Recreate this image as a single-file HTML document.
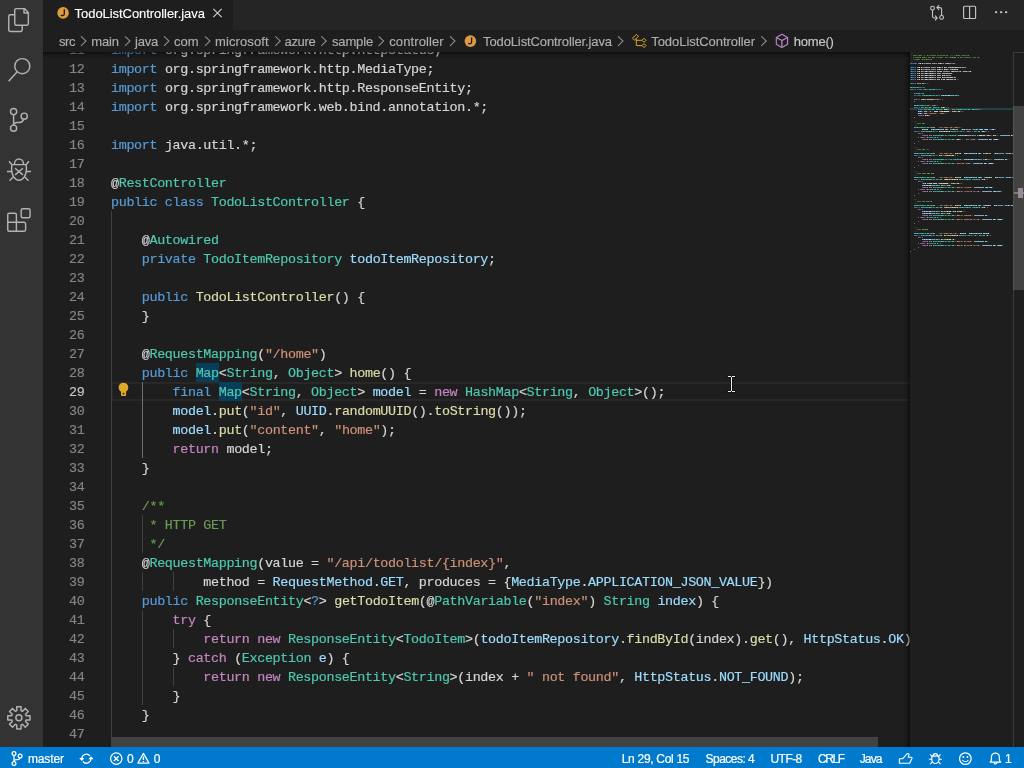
<!DOCTYPE html><html><head><meta charset="utf-8"><title>TodoListController.java</title><style>
*{box-sizing:border-box;margin:0;padding:0}
html,body{width:1024px;height:768px;overflow:hidden;background:#1e1e1e}
body{position:relative;font-family:"Liberation Sans",sans-serif;color:#ccc}
i{font-style:normal}
.abs{position:absolute}
#act{left:0;top:0;width:43px;height:747px;background:#333}
#tabs{left:43px;top:0;width:981px;height:30px;background:#252526}
#tab{left:0;top:0;width:190px;height:30px;background:#1e1e1e}
#bc{left:43px;top:30px;width:981px;height:22px;background:#1e1e1e;z-index:5}
#ed{left:43px;top:52px;width:981px;height:695px;background:#1e1e1e;overflow:hidden}
#status{left:0;top:747px;width:1024px;height:21px;background:#007acc;color:#fff;font-size:12px}
.ln{-webkit-text-stroke:0.15px;position:absolute;left:0;width:84.5px;text-align:right;color:#858585;height:19px;line-height:19px;font-family:"Liberation Mono",monospace;font-size:13.4px;letter-spacing:-0.3413px}
.ln.cur{color:#c6c6c6}
.cl{-webkit-text-stroke:0.18px;position:absolute;left:111px;height:19px;line-height:19px;white-space:pre;color:#d4d4d4;font-family:"Liberation Mono",monospace;font-size:13.4px;letter-spacing:-0.3413px}
.k{color:#569cd6}.c{color:#c586c0}.t{color:#4ec9b0}.f{color:#dcdcaa}.v{color:#9cdcfe}.s{color:#ce9178}.m{color:#6a9955}
.g{position:absolute;width:1px;background:#404040}
.g.a{background:#707070}
.wh{position:absolute;background:#083d5c;height:19px}
.st{-webkit-text-stroke:0.2px;position:absolute;top:0;height:21px;line-height:25px;white-space:pre}
.bct{-webkit-text-stroke:0.16px;position:absolute;top:1px;height:22px;line-height:22px;font-size:13px;color:#a9a9a9;white-space:pre}
</style></head><body><div id="root" style="position:absolute;left:0;top:0;width:1024px;height:768px;will-change:transform">
<div id="edbg" class="abs" style="left:43px;top:52px;width:981px;height:695px;background:#1e1e1e"></div>
<div class="abs" style="left:111px;top:382px;width:799px;height:19px;border:2px solid #282828;border-right:0"></div>
<div class="wh" style="left:195.7px;top:363px;width:23.1px"></div>
<div class="wh" style="left:218.8px;top:382px;width:23.1px"></div>
<div class="g" style="left:111px;top:211px;height:19px"></div>
<div class="g" style="left:111px;top:230px;height:19px"></div>
<div class="g" style="left:111px;top:249px;height:19px"></div>
<div class="g" style="left:111px;top:268px;height:19px"></div>
<div class="g" style="left:111px;top:287px;height:19px"></div>
<div class="g" style="left:111px;top:306px;height:19px"></div>
<div class="g" style="left:111px;top:325px;height:19px"></div>
<div class="g" style="left:111px;top:344px;height:19px"></div>
<div class="g" style="left:111px;top:363px;height:19px"></div>
<div class="g" style="left:111px;top:382px;height:19px"></div>
<div class="g a" style="left:142px;top:382px;height:19px"></div>
<div class="g" style="left:111px;top:401px;height:19px"></div>
<div class="g a" style="left:142px;top:401px;height:19px"></div>
<div class="g" style="left:111px;top:420px;height:19px"></div>
<div class="g a" style="left:142px;top:420px;height:19px"></div>
<div class="g" style="left:111px;top:439px;height:19px"></div>
<div class="g a" style="left:142px;top:439px;height:19px"></div>
<div class="g" style="left:111px;top:458px;height:19px"></div>
<div class="g" style="left:111px;top:477px;height:19px"></div>
<div class="g" style="left:111px;top:496px;height:19px"></div>
<div class="g" style="left:111px;top:515px;height:19px"></div>
<div class="g" style="left:142px;top:515px;height:19px"></div>
<div class="g" style="left:111px;top:534px;height:19px"></div>
<div class="g" style="left:142px;top:534px;height:19px"></div>
<div class="g" style="left:111px;top:553px;height:19px"></div>
<div class="g" style="left:111px;top:572px;height:19px"></div>
<div class="g" style="left:142px;top:572px;height:19px"></div>
<div class="g" style="left:173px;top:572px;height:19px"></div>
<div class="g" style="left:111px;top:591px;height:19px"></div>
<div class="g" style="left:111px;top:610px;height:19px"></div>
<div class="g" style="left:142px;top:610px;height:19px"></div>
<div class="g" style="left:111px;top:629px;height:19px"></div>
<div class="g" style="left:142px;top:629px;height:19px"></div>
<div class="g" style="left:173px;top:629px;height:19px"></div>
<div class="g" style="left:111px;top:648px;height:19px"></div>
<div class="g" style="left:142px;top:648px;height:19px"></div>
<div class="g" style="left:111px;top:667px;height:19px"></div>
<div class="g" style="left:142px;top:667px;height:19px"></div>
<div class="g" style="left:173px;top:667px;height:19px"></div>
<div class="g" style="left:111px;top:686px;height:19px"></div>
<div class="g" style="left:142px;top:686px;height:19px"></div>
<div class="g" style="left:111px;top:705px;height:19px"></div>
<div class="g" style="left:111px;top:724px;height:19px"></div>
<div class="g" style="left:111px;top:743px;height:19px"></div>
<div class="ln" style="top:41px">11</div>
<div class="cl" style="top:41px;width:799px;overflow:hidden"><i class="k">import </i>org.springframework.http.HttpStatus;</div>
<div class="ln" style="top:60px">12</div>
<div class="cl" style="top:60px;width:799px;overflow:hidden"><i class="k">import </i>org.springframework.http.MediaType;</div>
<div class="ln" style="top:79px">13</div>
<div class="cl" style="top:79px;width:799px;overflow:hidden"><i class="k">import </i>org.springframework.http.ResponseEntity;</div>
<div class="ln" style="top:98px">14</div>
<div class="cl" style="top:98px;width:799px;overflow:hidden"><i class="k">import </i>org.springframework.web.bind.annotation.*;</div>
<div class="ln" style="top:117px">15</div>
<div class="ln" style="top:136px">16</div>
<div class="cl" style="top:136px;width:799px;overflow:hidden"><i class="k">import </i>java.util.*;</div>
<div class="ln" style="top:155px">17</div>
<div class="ln" style="top:174px">18</div>
<div class="cl" style="top:174px;width:799px;overflow:hidden">@<i class="t">RestController</i></div>
<div class="ln" style="top:193px">19</div>
<div class="cl" style="top:193px;width:799px;overflow:hidden"><i class="k">public class </i><i class="t">TodoListController </i>{</div>
<div class="ln" style="top:212px">20</div>
<div class="ln" style="top:231px">21</div>
<div class="cl" style="top:231px;width:799px;overflow:hidden">    @<i class="t">Autowired</i></div>
<div class="ln" style="top:250px">22</div>
<div class="cl" style="top:250px;width:799px;overflow:hidden">    <i class="k">private </i><i class="t">TodoItemRepository </i><i class="v">todoItemRepository</i>;</div>
<div class="ln" style="top:269px">23</div>
<div class="ln" style="top:288px">24</div>
<div class="cl" style="top:288px;width:799px;overflow:hidden">    <i class="k">public </i><i class="f">TodoListController</i>() {</div>
<div class="ln" style="top:307px">25</div>
<div class="cl" style="top:307px;width:799px;overflow:hidden">    }</div>
<div class="ln" style="top:326px">26</div>
<div class="ln" style="top:345px">27</div>
<div class="cl" style="top:345px;width:799px;overflow:hidden">    @<i class="t">RequestMapping</i>(<i class="s">"/home"</i>)</div>
<div class="ln" style="top:364px">28</div>
<div class="cl" style="top:364px;width:799px;overflow:hidden">    <i class="k">public </i><i class="t">Map</i>&lt;<i class="t">String</i>, <i class="t">Object</i>&gt; <i class="f">home</i>() {</div>
<div class="ln cur" style="top:383px">29</div>
<div class="cl" style="top:383px;width:799px;overflow:hidden">        <i class="k">final </i><i class="t">Map</i>&lt;<i class="t">String</i>, <i class="t">Object</i>&gt; <i class="v">model </i>= <i class="c">new </i><i class="t">HashMap</i>&lt;<i class="t">String</i>, <i class="t">Object</i>&gt;();</div>
<div class="ln" style="top:402px">30</div>
<div class="cl" style="top:402px;width:799px;overflow:hidden">        <i class="v">model</i>.<i class="f">put</i>(<i class="s">"id"</i>, <i class="v">UUID</i>.<i class="f">randomUUID</i>().<i class="f">toString</i>());</div>
<div class="ln" style="top:421px">31</div>
<div class="cl" style="top:421px;width:799px;overflow:hidden">        <i class="v">model</i>.<i class="f">put</i>(<i class="s">"content"</i>, <i class="s">"home"</i>);</div>
<div class="ln" style="top:440px">32</div>
<div class="cl" style="top:440px;width:799px;overflow:hidden">        <i class="c">return </i>model;</div>
<div class="ln" style="top:459px">33</div>
<div class="cl" style="top:459px;width:799px;overflow:hidden">    }</div>
<div class="ln" style="top:478px">34</div>
<div class="ln" style="top:497px">35</div>
<div class="cl" style="top:497px;width:799px;overflow:hidden">    <i class="m">/**</i></div>
<div class="ln" style="top:516px">36</div>
<div class="cl" style="top:516px;width:799px;overflow:hidden">     <i class="m">* HTTP GET</i></div>
<div class="ln" style="top:535px">37</div>
<div class="cl" style="top:535px;width:799px;overflow:hidden">     <i class="m">*/</i></div>
<div class="ln" style="top:554px">38</div>
<div class="cl" style="top:554px;width:799px;overflow:hidden">    @<i class="t">RequestMapping</i>(value = <i class="s">"/api/todolist/{index}"</i>,</div>
<div class="ln" style="top:573px">39</div>
<div class="cl" style="top:573px;width:799px;overflow:hidden">            method = <i class="v">RequestMethod</i>.<i class="v">GET</i>, produces = {<i class="v">MediaType</i>.<i class="v">APPLICATION_JSON_VALUE</i>})</div>
<div class="ln" style="top:592px">40</div>
<div class="cl" style="top:592px;width:799px;overflow:hidden">    <i class="k">public </i><i class="t">ResponseEntity</i>&lt;<i class="k">?</i>&gt; <i class="f">getTodoItem</i>(@<i class="t">PathVariable</i>(<i class="s">"index"</i>) <i class="t">String </i><i class="v">index</i>) {</div>
<div class="ln" style="top:611px">41</div>
<div class="cl" style="top:611px;width:799px;overflow:hidden">        <i class="c">try </i>{</div>
<div class="ln" style="top:630px">42</div>
<div class="cl" style="top:630px;width:799px;overflow:hidden">            <i class="c">return new </i><i class="t">ResponseEntity</i>&lt;<i class="t">TodoItem</i>&gt;(<i class="v">todoItemRepository</i>.<i class="f">findById</i>(index).<i class="f">get</i>(), <i class="v">HttpStatus</i>.<i class="v">OK</i>);</div>
<div class="ln" style="top:649px">43</div>
<div class="cl" style="top:649px;width:799px;overflow:hidden">        } <i class="c">catch </i>(<i class="t">Exception </i><i class="v">e</i>) {</div>
<div class="ln" style="top:668px">44</div>
<div class="cl" style="top:668px;width:799px;overflow:hidden">            <i class="c">return new </i><i class="t">ResponseEntity</i>&lt;<i class="t">String</i>&gt;(index + <i class="s">" not found"</i>, <i class="v">HttpStatus</i>.<i class="v">NOT_FOUND</i>);</div>
<div class="ln" style="top:687px">45</div>
<div class="cl" style="top:687px;width:799px;overflow:hidden">        }</div>
<div class="ln" style="top:706px">46</div>
<div class="cl" style="top:706px;width:799px;overflow:hidden">    }</div>
<div class="ln" style="top:725px">47</div>
<div class="ln" style="top:744px">48</div>
<div class="cl" style="top:744px;width:799px;overflow:hidden">    <i class="m">/**</i></div>
<svg class="abs" style="left:116px;top:380px" width="16" height="19" viewBox="116 380 16 19"><circle cx="123.45" cy="387.55" r="4.85" fill="#dea828"/><path d="M121 389.5h5.1v5.4q0 1.2-1.2 1.2h-2.7q-1.2 0-1.2-1.2z" fill="#dea828"/><circle cx="123.5" cy="393.7" r="0.9" fill="#2a2418"/></svg>
<svg class="abs" style="left:726px;top:374px;z-index:6" width="11" height="20" viewBox="726 374 11 20" shape-rendering="crispEdges"><g fill="#151515"><rect x="727" y="375" width="9" height="3"/><rect x="730" y="377" width="3" height="14"/><rect x="727" y="390" width="9" height="3"/></g><g fill="#eaf0f6"><rect x="728" y="376" width="3" height="1"/><rect x="732" y="376" width="3" height="1"/><rect x="731" y="377" width="1" height="14"/><rect x="728" y="391" width="3" height="1"/><rect x="732" y="391" width="3" height="1"/></g></svg>
<style>#mm p{height:2px;line-height:2px;overflow:hidden;white-space:pre;width:206.0px}#mm p b{font-weight:normal;position:relative;top:0.5px;-webkit-text-stroke:0.0px}</style>
<svg width="0" height="0" style="position:absolute"><filter id="mmf" x="0" y="0" width="100%" height="100%" color-interpolation-filters="sRGB"><feComponentTransfer><feFuncA type="gamma" amplitude="4.5" exponent="1.5" offset="0"/></feComponentTransfer></filter></svg>
<div class="abs" style="left:910px;top:52px;width:103px;height:695px;overflow:hidden;background:#1e1e1e">
<div class="abs" style="left:0;top:56px;width:103px;height:2px;background:#1f4347"></div>
<div class="abs" style="left:0;top:0;width:103px;height:200px;overflow:hidden;filter:url(#mmf);"><div id="mm" class="abs" style="left:0;top:0;transform-origin:0 0;transform:scaleX(0.5);font-family:'Liberation Mono',monospace;font-size:2.5px;letter-spacing:0.4998px;color:#d4d4d4">
<p><b><i class="m">/**</i></b></p>
<p><b> <i class="m">* Copyright (c) Microsoft Corporation. All rights reserved.</i></b></p>
<p><b> <i class="m">* Licensed under the MIT License. See LICENSE in the project root for</i></b></p>
<p><b> <i class="m">* license information.</i></b></p>
<p><b> <i class="m">*/</i></b></p>
<p><b><i class="k">package </i>com.microsoft.azure.sample.controller;</b></p>
<p></p>
<p><b><i class="k">import </i>com.microsoft.azure.sample.dao.TodoItemRepository;</b></p>
<p><b><i class="k">import </i>com.microsoft.azure.sample.model.TodoItem;</b></p>
<p><b><i class="k">import </i>org.springframework.beans.factory.annotation.Autowired;</b></p>
<p><b><i class="k">import </i>org.springframework.http.HttpStatus;</b></p>
<p><b><i class="k">import </i>org.springframework.http.MediaType;</b></p>
<p><b><i class="k">import </i>org.springframework.http.ResponseEntity;</b></p>
<p><b><i class="k">import </i>org.springframework.web.bind.annotation.*;</b></p>
<p></p>
<p><b><i class="k">import </i>java.util.*;</b></p>
<p></p>
<p><b>@<i class="t">RestController</i></b></p>
<p><b><i class="k">public class </i><i class="t">TodoListController </i>{</b></p>
<p></p>
<p><b>    @<i class="t">Autowired</i></b></p>
<p><b>    <i class="k">private </i><i class="t">TodoItemRepository </i><i class="v">todoItemRepository</i>;</b></p>
<p></p>
<p><b>    <i class="k">public </i><i class="f">TodoListController</i>() {</b></p>
<p><b>    }</b></p>
<p></p>
<p><b>    @<i class="t">RequestMapping</i>(<i class="s">"/home"</i>)</b></p>
<p><b>    <i class="k">public </i><i class="t">Map</i>&lt;<i class="t">String</i>, <i class="t">Object</i>&gt; <i class="f">home</i>() {</b></p>
<p><b>        <i class="k">final </i><i class="t">Map</i>&lt;<i class="t">String</i>, <i class="t">Object</i>&gt; <i class="v">model </i>= <i class="c">new </i><i class="t">HashMap</i>&lt;<i class="t">String</i>, <i class="t">Object</i>&gt;();</b></p>
<p><b>        <i class="v">model</i>.<i class="f">put</i>(<i class="s">"id"</i>, <i class="v">UUID</i>.<i class="f">randomUUID</i>().<i class="f">toString</i>());</b></p>
<p><b>        <i class="v">model</i>.<i class="f">put</i>(<i class="s">"content"</i>, <i class="s">"home"</i>);</b></p>
<p><b>        <i class="c">return </i>model;</b></p>
<p><b>    }</b></p>
<p></p>
<p><b>    <i class="m">/**</i></b></p>
<p><b>     <i class="m">* HTTP GET</i></b></p>
<p><b>     <i class="m">*/</i></b></p>
<p><b>    @<i class="t">RequestMapping</i>(value = <i class="s">"/api/todolist/{index}"</i>,</b></p>
<p><b>            method = <i class="v">RequestMethod</i>.<i class="v">GET</i>, produces = {<i class="v">MediaType</i>.<i class="v">APPLICATION_JSON_VALUE</i>})</b></p>
<p><b>    <i class="k">public </i><i class="t">ResponseEntity</i>&lt;<i class="k">?</i>&gt; <i class="f">getTodoItem</i>(@<i class="t">PathVariable</i>(<i class="s">"index"</i>) <i class="t">String </i><i class="v">index</i>) {</b></p>
<p><b>        <i class="c">try </i>{</b></p>
<p><b>            <i class="c">return new </i><i class="t">ResponseEntity</i>&lt;<i class="t">TodoItem</i>&gt;(<i class="v">todoItemRepository</i>.<i class="f">findById</i>(index).<i class="f">get</i>(), <i class="v">HttpStatus</i>.<i class="v">OK</i>);</b></p>
<p><b>        } <i class="c">catch </i>(<i class="t">Exception </i><i class="v">e</i>) {</b></p>
<p><b>            <i class="c">return new </i><i class="t">ResponseEntity</i>&lt;<i class="t">String</i>&gt;(index + <i class="s">" not found"</i>, <i class="v">HttpStatus</i>.<i class="v">NOT_FOUND</i>);</b></p>
<p><b>        }</b></p>
<p><b>    }</b></p>
<p></p>
<p><b>    <i class="m">/**</i></b></p>
<p><b>     <i class="m">* HTTP GET ALL</i></b></p>
<p><b>     <i class="m">*/</i></b></p>
<p><b>    @<i class="t">RequestMapping</i>(value = <i class="s">"/api/todolist"</i>, method = <i class="v">RequestMethod</i>.<i class="v">GET</i>, produces = {<i class="v">MediaType</i>.<i class="v">APPLICATION_JSON_VALUE</i>})</b></p>
<p><b>    <i class="k">public </i><i class="t">ResponseEntity</i>&lt;<i class="k">?</i>&gt; <i class="f">getAllTodoItems</i>() {</b></p>
<p><b>        <i class="c">try </i>{</b></p>
<p><b>            <i class="c">return new </i><i class="t">ResponseEntity</i>&lt;<i class="t">List</i>&lt;<i class="t">TodoItem</i>&gt;&gt;(<i class="v">todoItemRepository</i>.<i class="f">findAll</i>(), <i class="v">HttpStatus</i>.<i class="v">OK</i>);</b></p>
<p><b>        } <i class="c">catch </i>(<i class="t">Exception </i><i class="v">e</i>) {</b></p>
<p><b>            <i class="c">return new </i><i class="t">ResponseEntity</i>&lt;<i class="t">String</i>&gt;(<i class="s">"Nothing found"</i>, <i class="v">HttpStatus</i>.<i class="v">NOT_FOUND</i>);</b></p>
<p><b>        }</b></p>
<p><b>    }</b></p>
<p></p>
<p><b>    <i class="m">/**</i></b></p>
<p><b>     <i class="m">* HTTP POST NEW ONE</i></b></p>
<p><b>     <i class="m">*/</i></b></p>
<p><b>    @<i class="t">RequestMapping</i>(value = <i class="s">"/api/todolist"</i>, method = <i class="v">RequestMethod</i>.<i class="v">POST</i>, consumes = <i class="v">MediaType</i>.<i class="v">APPLICATION_JSON_VALUE</i>)</b></p>
<p><b>    <i class="k">public </i><i class="t">ResponseEntity</i>&lt;<i class="t">String</i>&gt; <i class="f">addNewTodoItem</i>(@<i class="t">RequestBody TodoItem </i><i class="v">item</i>) {</b></p>
<p><b>        <i class="c">try </i>{</b></p>
<p><b>            <i class="v">item</i>.<i class="f">setID</i>(<i class="v">UUID</i>.<i class="f">randomUUID</i>().<i class="f">toString</i>());</b></p>
<p><b>            <i class="v">todoItemRepository</i>.<i class="f">save</i>(item);</b></p>
<p><b>            <i class="c">return new </i><i class="t">ResponseEntity</i>&lt;<i class="t">String</i>&gt;(<i class="s">"Entity created"</i>, <i class="v">HttpStatus</i>.<i class="v">CREATED</i>);</b></p>
<p><b>        } <i class="c">catch </i>(<i class="t">Exception </i><i class="v">e</i>) {</b></p>
<p><b>            <i class="c">return new </i><i class="t">ResponseEntity</i>&lt;<i class="t">String</i>&gt;(<i class="s">"Entity creation failed"</i>, <i class="v">HttpStatus</i>.<i class="v">CONFLICT</i>);</b></p>
<p><b>        }</b></p>
<p><b>    }</b></p>
<p></p>
<p><b>    <i class="m">/**</i></b></p>
<p><b>     <i class="m">* HTTP PUT UPDATE</i></b></p>
<p><b>     <i class="m">*/</i></b></p>
<p><b>    @<i class="t">RequestMapping</i>(value = <i class="s">"/api/todolist"</i>, method = <i class="v">RequestMethod</i>.<i class="v">PUT</i>, consumes = <i class="v">MediaType</i>.<i class="v">APPLICATION_JSON_VALUE</i>)</b></p>
<p><b>    <i class="k">public </i><i class="t">ResponseEntity</i>&lt;<i class="t">String</i>&gt; <i class="f">updateTodoItem</i>(@<i class="t">RequestBody TodoItem </i><i class="v">item</i>) {</b></p>
<p><b>        <i class="c">try </i>{</b></p>
<p><b>            <i class="v">todoItemRepository</i>.<i class="f">deleteById</i>(<i class="v">item</i>.<i class="f">getID</i>());</b></p>
<p><b>            <i class="v">todoItemRepository</i>.<i class="f">save</i>(item);</b></p>
<p><b>            <i class="c">return new </i><i class="t">ResponseEntity</i>&lt;<i class="t">String</i>&gt;(<i class="s">"Entity updated"</i>, <i class="v">HttpStatus</i>.<i class="v">OK</i>);</b></p>
<p><b>        } <i class="c">catch </i>(<i class="t">Exception </i><i class="v">e</i>) {</b></p>
<p><b>            <i class="c">return new </i><i class="t">ResponseEntity</i>&lt;<i class="t">String</i>&gt;(<i class="s">"Entity updating failed"</i>, <i class="v">HttpStatus</i>.<i class="v">NOT_FOUND</i>);</b></p>
<p><b>        }</b></p>
<p><b>    }</b></p>
<p></p>
<p><b>    <i class="m">/**</i></b></p>
<p><b>     <i class="m">* HTTP DELETE</i></b></p>
<p><b>     <i class="m">*/</i></b></p>
<p><b>    @<i class="t">RequestMapping</i>(value = <i class="s">"/api/todolist/{id}"</i>, method = <i class="v">RequestMethod</i>.<i class="v">DELETE</i>)</b></p>
<p><b>    <i class="k">public </i><i class="t">ResponseEntity</i>&lt;<i class="t">String</i>&gt; <i class="f">deleteTodoItem</i>(@<i class="t">PathVariable</i>(<i class="s">"id"</i>) <i class="t">String </i><i class="v">id</i>) {</b></p>
<p><b>        <i class="c">try </i>{</b></p>
<p><b>            <i class="v">todoItemRepository</i>.<i class="f">deleteById</i>(id);</b></p>
<p><b>            <i class="c">return new </i><i class="t">ResponseEntity</i>&lt;<i class="t">String</i>&gt;(<i class="s">"Entity deleted"</i>, <i class="v">HttpStatus</i>.<i class="v">OK</i>);</b></p>
<p><b>        } <i class="c">catch </i>(<i class="t">Exception </i><i class="v">e</i>) {</b></p>
<p><b>            <i class="c">return new </i><i class="t">ResponseEntity</i>&lt;<i class="t">String</i>&gt;(<i class="s">"Entity deleting failed"</i>, <i class="v">HttpStatus</i>.<i class="v">NOT_FOUND</i>);</b></p>
<p><b>        }</b></p>
<p><b>    }</b></p>
<p><b>}</b></p>
</div></div></div>
<div class="abs" style="left:904px;top:52px;width:6px;height:695px;box-shadow:inset -6px 0 6px -6px #000"></div>
<div class="abs" style="left:111px;top:737px;width:767px;height:10px;background:#424242"></div>
<div class="abs" style="left:1013px;top:52px;width:1px;height:695px;background:#3b3b3b"></div>
<div class="abs" style="left:1013px;top:52px;width:11px;height:1px;background:#3b3b3b"></div>
<div class="abs" style="left:1013px;top:106px;width:11px;height:184px;background:rgba(121,121,121,.4)"></div>
<div class="abs" style="left:1014px;top:192px;width:10px;height:2px;background:#7b7b7b"></div>
<div class="abs" style="left:1018px;top:188px;width:5px;height:10px;background:#928e93"></div>
<div class="abs" style="left:43px;top:52px;width:867px;height:6px;box-shadow:inset 0 6px 6px -6px #000;z-index:4"></div>
<div id="bc" class="abs">
<span class="bct" style="left:16.00px;letter-spacing:-0.448px;color:#adadad">src</span>
<span class="bct" style="left:48.25px;letter-spacing:-0.172px;color:#adadad">main</span>
<span class="bct" style="left:92.00px;letter-spacing:-0.215px;color:#adadad">java</span>
<span class="bct" style="left:131.00px;letter-spacing:-0.021px;color:#adadad">com</span>
<span class="bct" style="left:172.00px;letter-spacing:0.113px;color:#adadad">microsoft</span>
<span class="bct" style="left:241.50px;letter-spacing:-0.306px;color:#adadad">azure</span>
<span class="bct" style="left:289.00px;letter-spacing:-0.154px;color:#adadad">sample</span>
<span class="bct" style="left:346.25px;letter-spacing:0.103px;color:#adadad">controller</span>
<span class="bct" style="left:440.00px;letter-spacing:-0.110px;color:#adadad">TodoListController.java</span>
<span class="bct" style="left:608.25px;letter-spacing:-0.057px;color:#adadad">TodoListController</span>
<span class="bct" style="left:750.75px;letter-spacing:-0.198px;color:#c8c8c8">home()</span>
<svg class="abs" style="left:0;top:0" width="981" height="22" viewBox="0 0 981 22" fill="none"><path d="M38.0 6.3l5 4.7l-5 4.8M82.0 6.3l5 4.7l-5 4.8M121.0 6.3l5 4.7l-5 4.8M162.0 6.3l5 4.7l-5 4.8M232.3 6.3l5 4.7l-5 4.8M278.3 6.3l5 4.7l-5 4.8M335.6 6.3l5 4.7l-5 4.8M407.0 6.3l5 4.7l-5 4.8M575.0 6.3l5 4.7l-5 4.8M718.3 6.3l5 4.7l-5 4.8" stroke="#8f8f8f" stroke-width="1.05"/>
<circle cx="427.4" cy="11.100000000000001" r="5.8" fill="#e09b41"/><path d="M428.6 7.5v4.6q0 1.7-1.8 1.7q-1 0-1.7-.5" stroke="#1e1e1e" stroke-width="1.35"/>
<g stroke="#e5a72d" stroke-width="1"><path d="M593.5 4.5L595.5 6.4L591.4 10.1L589.4 8.2z"/><path d="M593.3 8.9V15.6H598.9M593.3 10.3H598.9"/><path d="M601.0 8.3l2 2l-2 2l-2-2zM601.0 13.6l2 2l-2 2l-2-2z"/></g>
<g stroke="#c088d4" stroke-width="1.1" stroke-linejoin="round"><path d="M738.9 4.2L744.6 7.4V14.3L738.9 17.4L733.3 14.3V7.4z"/><path d="M733.3 7.4L738.9 10.5L744.6 7.4" /><path d="M738.9 10.5V17.4" stroke="#8d7f96" stroke-width="1.6"/></g>
</svg>
</div>
<div id="tabs" class="abs"><div id="tab" class="abs"></div>
<span class="abs" style="left:31.6px;top:-4px;height:35px;line-height:36px;font-size:13px;color:#fff;-webkit-text-stroke:0.12px;white-space:pre;letter-spacing:-0.054px">TodoListController.java</span>
<svg class="abs" style="left:0;top:0" width="981" height="30" viewBox="0 0 981 30" fill="none">
<circle cx="20.1" cy="12.9" r="5.8" fill="#e09b41"/><path d="M21.3 9.3v4.6q0 1.7-1.8 1.7q-1 0-1.7-.5" stroke="#1e1e1e" stroke-width="1.35"/>
<path d="M170.3 8.9l8.4 8.2M178.7 8.9l-8.4 8.2" stroke="#d0d0d0" stroke-width="1.1"/>
<g stroke="#c5c5c5" stroke-width="1.1"><circle cx="889.5" cy="8.2" r="1.9"/><circle cx="898.6" cy="17.4" r="1.9"/><path d="M889.5 10.1V16.2q0 1.8 1.8 1.8h2.6M892.0 15.6l2.2 2.4l-2.2 2.4"/><path d="M898.6 15.5V9.4q0-1.8-1.8-1.8h-2.6M896.1 10l-2.2-2.4l2.2-2.4"/></g>
<g stroke="#c5c5c5" stroke-width="1.15"><rect x="920.6" y="6.2" width="12" height="12.3" rx="1"/><path d="M926.6 6.2V18.5"/></g>
<g fill="#c5c5c5"><rect x="952" y="11.3" width="2.2" height="1.8"/><rect x="957" y="11.3" width="2.2" height="1.8"/><rect x="962" y="11.3" width="2.2" height="1.8"/></g>
</svg>
</div>
<div id="act" class="abs">
<svg class="abs" style="left:0;top:0" width="43" height="747" viewBox="0 0 43 747" fill="none" stroke="#b2b2b2" stroke-width="1.45" stroke-linejoin="round" stroke-linecap="butt">
<path d="M14.75 14.75H10.25a1.5 1.5 0 0 0-1.5 1.5V29.9a1.5 1.5 0 0 0 1.5 1.5H20.7a1.5 1.5 0 0 0 1.5-1.5V25.3"/>
<path d="M16.25 8.6H24.4L28.35 12.5V23.8a1.5 1.5 0 0 1-1.5 1.5H16.25a1.5 1.5 0 0 1-1.5-1.5V10.1a1.5 1.5 0 0 1 1.5-1.5zM24 8.8V13H28.2"/>
<circle cx="22.3" cy="66.2" r="7.55"/><path d="M17 72L8.6 81.2"/>
<circle cx="13.6" cy="111.6" r="3.1"/><circle cx="13.6" cy="128.2" r="3.1"/><circle cx="24.2" cy="116.2" r="3.1"/>
<path d="M13.6 114.7V125.1M23.6 119.3Q22.8 122.4 19.5 122.4H17Q14.3 122.4 13.6 124.8"/>
<path d="M11.9 164.6H26.1Q27.3 172 24.3 176.8Q22 180.2 19 180.2Q16 180.2 13.7 176.8Q10.7 172 11.9 164.6z"/>
<path d="M14.6 164.6V163.3a4.4 4.4 0 0 1 8.8 0V164.6"/>
<path d="M15.1 168.2L22.9 174.9M22.9 168.2L15.1 174.9"/>
<path d="M9 161.3L12 164.8M29 161.3L26 164.8M7 171.5H11.4M31 171.5H26.6M9.5 180.8L13.4 176.8M28.5 180.8L24.6 176.8"/>
<path d="M16.4 222.2V214.8a1.5 1.5 0 0 0-1.5-1.5H9.25a1.5 1.5 0 0 0-1.5 1.5V229.7a1.5 1.5 0 0 0 1.5 1.5H24.1a1.5 1.5 0 0 0 1.5-1.5V223.7a1.5 1.5 0 0 0-1.5-1.5H7.75M16.4 222.2V231.2"/>
<rect x="21.2" y="208.8" width="8.85" height="8.9" rx="1.5"/>
<path d="M16.83 710.59 L16.73 706.66 L21.07 706.66 L20.97 710.59 L22.54 711.24 L25.25 708.39 L28.31 711.45 L25.46 714.16 L26.11 715.73 L30.04 715.63 L30.04 719.97 L26.11 719.87 L25.46 721.44 L28.31 724.15 L25.25 727.21 L22.54 724.36 L20.97 725.01 L21.07 728.94 L16.73 728.94 L16.83 725.01 L15.26 724.36 L12.55 727.21 L9.49 724.15 L12.34 721.44 L11.69 719.87 L7.76 719.97 L7.76 715.63 L11.69 715.73 L12.34 714.16 L9.49 711.45 L12.55 708.39 L15.26 711.24Z"/><circle cx="18.9" cy="717.8" r="3"/>
</svg>
</div>
<div id="status" class="abs">
<span class="st" style="left:28.00px;letter-spacing:-0.148px">master</span>
<span class="st" style="left:126.91px">0</span>
<span class="st" style="left:153.71px">0</span>
<span class="st" style="left:621.75px;letter-spacing:-0.299px">Ln 29, Col 15</span>
<span class="st" style="left:705.50px;letter-spacing:-0.514px">Spaces: 4</span>
<span class="st" style="left:770.50px;letter-spacing:-0.550px">UTF-8</span>
<span class="st" style="left:818.00px;letter-spacing:-1.398px">CRLF</span>
<span class="st" style="left:859.70px;letter-spacing:-0.865px">Java</span>
<span class="st" style="left:1005.11px">1</span>
<svg class="abs" style="left:0;top:0" width="1024" height="21" viewBox="0 0 1024 21" fill="none" stroke="#fff" stroke-width="1.25" stroke-linejoin="round">
<circle cx="14" cy="6.4" r="1.9"/><circle cx="14" cy="16.4" r="1.9"/><circle cx="20.1" cy="9.0" r="1.9"/>
<path d="M14 8.3V14.5M20 10.9Q19.6 12.6 17.5 12.6H16.2Q14.4 12.7 14 14.3"/>
<path d="M81.9 12.0A4.5 4.5 0 0 1 89.91 8.91M90.9 11.399999999999999A4.5 4.5 0 0 1 82.89 14.49"/>
<path d="M79.2 11.1h5.2l-2.6 3z" fill="#fff" stroke="none"/><path d="M93.60000000000001 12.299999999999999h-5.2l2.6-3z" fill="#fff" stroke="none"/>
<circle cx="116.25" cy="11.6" r="5.7"/><path d="M113.9 9.2l4.7 4.8M118.6 9.2l-4.7 4.8"/>
<path d="M143.45 6.4L149 16.1H137.9z"/><path d="M143.45 9.6v3.4M143.45 14v1.2" stroke-width="1.3"/>
<path d="M899.4 11.7H902.7L907.2 6.7Q908.8 6.2 909 7.8L908.3 10.2H911.3Q912.3 10.4 911.9 11.5L909.7 16.2H899.4z" stroke-width="1.15"/>
<path d="M932.1 9.2H938.6999999999999Q939.6999999999999 13.6 937.9 15.4Q935.4 17.6 932.9 15.4Q931.1 13.6 932.1 9.2z" stroke-width="1.2"/>
<path d="M933.1999999999999 9.0a2.2 2.4 0 0 1 4.4 0" stroke-width="1.2"/>
<path d="M930.1999999999999 7.4l2 2M940.6 7.4l-2 2M928.9 12.200000000000001h2.8M941.9 12.200000000000001h-2.8M930.1999999999999 17.2l2-2M940.6 17.2l-2-2" stroke-width="1.1"/>
<circle cx="965.35" cy="11.6" r="5.8"/><path d="M962.3 13Q965.35 16.4 968.4 13" stroke-width="1.1"/><circle cx="963.3" cy="10" r="0.95" fill="#fff" stroke="none"/><circle cx="967.4" cy="10" r="0.95" fill="#fff" stroke="none"/>
<path d="M990.2 15.2H1000.6Q999.4 14 999.4 12.4V10.2A4 4.2 0 0 0 991.4 10.2V12.4Q991.4 14 990.2 15.2zM994.1 15.4a1.35 1.5 0 0 0 2.7 0"/>
</svg>
</div>
</div></body></html>
